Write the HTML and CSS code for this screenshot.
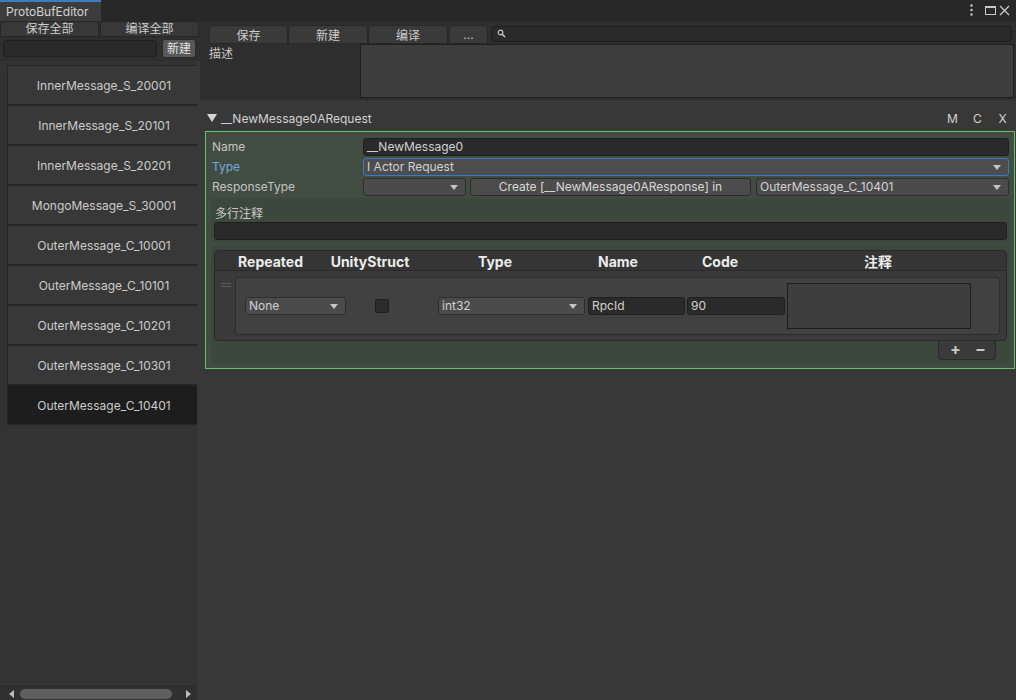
FILE: index.html
```html
<!DOCTYPE html>
<html>
<head>
<meta charset="utf-8">
<link rel="stylesheet" href="styles.css">
</head>
<body>
<div class="titlebar">
  <div class="tab">ProtoBufEditor</div>
  <svg class="winctl" width="50" height="21" viewBox="0 0 50 21">
    <circle cx="9.5" cy="5.5" r="1.2" fill="#c8c8c8"/>
    <circle cx="9.5" cy="10" r="1.2" fill="#c8c8c8"/>
    <circle cx="9.5" cy="14.5" r="1.2" fill="#c8c8c8"/>
    <rect x="23.5" y="6.5" width="10" height="8" fill="none" stroke="#c8c8c8" stroke-width="1"/>
    <rect x="23" y="6" width="11" height="2" fill="#c8c8c8"/>
    <path d="M38 6 L47 15 M47 6 L38 15" stroke="#c8c8c8" stroke-width="1.3"/>
  </svg>
</div>
<div class="main">
  <div class="left">
    <div class="lbtns">
      <div class="tbtn lw">保存全部</div>
      <div class="tbtn lw">编译全部</div>
    </div>
    <div class="lnew">
      <div class="tfield lin"></div>
      <div class="btn newbtn">新建</div>
    </div>
    <div class="list">
      <div class="items">
        <div class="item">InnerMessage_S_20001</div>
        <div class="item">InnerMessage_S_20101</div>
        <div class="item">InnerMessage_S_20201</div>
        <div class="item">MongoMessage_S_30001</div>
        <div class="item">OuterMessage_C_10001</div>
        <div class="item">OuterMessage_C_10101</div>
        <div class="item">OuterMessage_C_10201</div>
        <div class="item">OuterMessage_C_10301</div>
        <div class="item sel">OuterMessage_C_10401</div>
      </div>
      <div class="hscroll">
        <svg width="5" height="8" viewBox="0 0 5 8"><polygon points="5,0 5,8 0,4" fill="#bdbdbd"/></svg>
        <div class="thumb"></div>
        <svg class="rarrow" width="5" height="8" viewBox="0 0 5 8"><polygon points="0,0 0,8 5,4" fill="#bdbdbd"/></svg>
      </div>
    </div>
  </div>
  <div class="right">
    <div class="toolbar">
      <div class="tbtn b79">保存</div>
      <div class="tbtn b80">新建</div>
      <div class="tbtn b80">编译</div>
      <div class="tbtn b39 dots">...</div>
      <div class="search">
        <svg width="10" height="10" viewBox="0 0 10 10"><circle cx="3.5" cy="3.5" r="2.3" fill="none" stroke="#c8c8c8" stroke-width="1.2"/><path d="M5.3 5.3 L8 8" stroke="#c8c8c8" stroke-width="1.6"/></svg>
      </div>
    </div>
    <div class="desc">
      <div class="desclabel">描述</div>
      <div class="descarea"></div>
    </div>
    <div class="msghead">
      <svg width="10" height="8" viewBox="0 0 10 8"><polygon points="0,0 10,0 5,8" fill="#d6d6d6"/></svg>
      <span class="msgtitle">__NewMessage0ARequest</span>
      <div class="hbtns"><span>M</span><span>C</span><span>X</span></div>
    </div>
    <div class="panel">
      <div class="row">
        <div class="plabel">Name</div>
        <div class="tfield grow">__NewMessage0</div>
      </div>
      <div class="row">
        <div class="plabel blue">Type</div>
        <div class="dd grow focus"><span>I Actor Request</span><svg width="8" height="5" viewBox="0 0 8 5"><polygon points="0,0 8,0 4,5" fill="#c4c4c4"/></svg></div>
      </div>
      <div class="row">
        <div class="plabel">ResponseType</div>
        <div class="dd w103"><span></span><svg width="8" height="5" viewBox="0 0 8 5"><polygon points="0,0 8,0 4,5" fill="#c4c4c4"/></svg></div>
        <div class="btn create">Create [__NewMessage0AResponse] in</div>
        <div class="dd grow ml5"><span>OuterMessage_C_10401</span><svg width="8" height="5" viewBox="0 0 8 5"><polygon points="0,0 8,0 4,5" fill="#c4c4c4"/></svg></div>
      </div>
      <div class="box cbox">
        <div class="clabel">多行注释</div>
        <div class="tfield"></div>
      </div>
      <div class="box fbox">
        <div class="table">
          <div class="thead">
            <span class="c1">Repeated</span>
            <span class="c2">UnityStruct</span>
            <span class="c3">Type</span>
            <span class="c4">Name</span>
            <span class="c5">Code</span>
            <span class="c6">注释</span>
          </div>
          <div class="tbody">
            <div class="handle"></div>
            <div class="frow">
              <div class="dd w101"><span>None</span><svg width="8" height="5" viewBox="0 0 8 5"><polygon points="0,0 8,0 4,5" fill="#c4c4c4"/></svg></div>
              <div class="check"></div>
              <div class="dd w147"><span>int32</span><svg width="8" height="5" viewBox="0 0 8 5"><polygon points="0,0 8,0 4,5" fill="#c4c4c4"/></svg></div>
              <div class="tfield fname">RpcId</div>
              <div class="tfield fcode">90</div>
              <div class="fcomment"></div>
            </div>
          </div>
        </div>
        <div class="tfoot"><span>+</span><span>−</span></div>
      </div>
    </div>
  </div>
</div>
</body>
</html>
```

FILE: styles.css
```css
* { box-sizing: border-box; margin: 0; padding: 0; }
html, body { width: 1016px; height: 700px; overflow: hidden; }
body {
  background: #383838;
  font-family: Inter, "Noto Sans CJK SC", sans-serif;
  font-size: 12px;
  color: #c4c4c4;
}
.titlebar { height: 21px; background: #282828; display: flex; }
.tab {
  width: 101px; background: #3c3c3c; border-top: 2px solid #3d7cc9;
  padding-left: 6px; line-height: 19px; color: #d4d4d4;
}
.winctl { margin-left: auto; margin-right: 4px; }
.main { display: flex; height: 679px; }

.left { width: 200px; display: flex; flex-direction: column; background: #383838; }
.lbtns { display: flex; height: 17px; background: #2f2f2f; }
.tbtn {
  background: #383838; border: 1px solid #262626; border-radius: 3px 3px 0 0;
  text-align: center; color: #cccccc; line-height: 14px; height: 16px;
}
.lw { width: 99px; margin-right: 1px; }
.lnew {
  display: flex; align-items: center; background: #2f2f2f;
  padding: 1px 0 3px 3px; height: 23px;
}
.tfield {
  background: #2a2a2a; border: 1px solid #1f1f1f; border-radius: 3px;
  height: 18px; line-height: 16px; padding-left: 3px; color: #d2d2d2;
}
.lin { width: 154px; height: 17px; }
.btn {
  background: #585858; border: 1px solid #2a2a2a; border-radius: 3px;
  color: #e2e2e2; text-align: center;
}
.newbtn { width: 34px; height: 19px; line-height: 17px; margin-left: 5px; }

.list { flex: 1; width: 197px; background: #333333; display: flex; flex-direction: column; overflow: hidden; }
.items { flex: 1; padding: 4px 0 0 7px; overflow: hidden; }
.item {
  width: 193px; height: 40px; background: #383838;
  border: 1px solid #262626; border-right: none;
  display: flex; align-items: center; justify-content: center;
  color: #cccccc; white-space: nowrap;
}
.item.sel { background: #1d1d1d; }
.hscroll {
  height: 14px; background: #303030; border-top: 1px solid #2a2a2a;
  display: flex; align-items: center; padding-left: 9px;
}
.thumb { width: 152px; height: 10px; border-radius: 5px; background: #5f5f5f; margin-left: 6px; }
.rarrow { margin-left: 14px; }

.right { flex: 1; display: flex; flex-direction: column; }
.toolbar { height: 23px; background: #2e2e2e; display: flex; padding: 4px 4px 0 9px; }
.toolbar .tbtn { height: 19px; line-height: 19px; background: #3a3a3a; border-color: #282828; }
.b79 { width: 79px; }
.b80 { width: 80px; }
.b39 { width: 39px; margin-left: 1px; }
.dots { line-height: 17px !important; }
.search {
  flex: 1; margin-left: 3px; margin-top: 1px; height: 16px;
  background: #2a2a2a; border: 1px solid #1e1e1e; border-radius: 4px;
  display: flex; align-items: center; padding-left: 5px;
}
.desc { height: 56px; background: #2e2e2e; display: flex; }
.desclabel { width: 160px; padding: 3px 0 0 9px; line-height: 14px; color: #c8c8c8; }
.descarea { flex: 1; height: 54px; margin-right: 2px; background: #3e3e3e; border: 1px solid #1f1f1f; }
.msghead {
  margin-top: 8px; height: 20px; display: flex; align-items: center;
  padding-left: 7px; color: #d2d2d2;
}
.msgtitle { margin-left: 4px; }
.hbtns { margin-left: auto; display: flex; margin-right: 1px; }
.hbtns span { width: 25px; text-align: center; }

.panel {
  margin: 3px 1px 0 5px; height: 238px;
  border: 1px solid #62c462; background: #414d41;
  padding: 6px 5px 0 6px;
}
.row { display: flex; height: 18px; margin-bottom: 2px; }
.plabel { width: 151px; line-height: 18px; color: #c4c4c4; }
.plabel.blue { color: #7ba6e0; }
.grow { flex: 1; }
.dd {
  background: #4b4b4b; border: 1px solid #2e2e2e; border-radius: 3px;
  height: 18px; display: flex; align-items: center; padding: 0 7px 0 3px;
  color: #d2d2d2;
}
.dd span { flex: 1; line-height: 16px; white-space: nowrap; }
.dd.focus { border-color: #3b79c4; background: #4d4d4d; }
.w103 { width: 103px; }
.w101 { width: 101px; }
.w147 { width: 147px; margin-left: 49px; }
.create { width: 281px; height: 18px; line-height: 16px; margin-left: 4px; background: #4c4c4c; color: #d8d8d8; }
.ml5 { margin-left: 5px; }

.box { margin: 0 -1px; background: #3c483c; }
.cbox { margin-top: 1px; padding: 0 3px 3px 3px; }
.clabel { height: 24px; line-height: 20px; padding: 6px 0 0 1px; color: #c8c8c8; }
.fbox { margin-top: 3px; padding: 4px 3px 4px 3px; display: flex; flex-direction: column; }
.table { border: 1px solid #292929; border-radius: 4px; background: #3a3a3a; overflow: hidden; }
.thead {
  height: 20px; background: #353535; border-bottom: 1px solid #2a2a2a;
  display: flex; font-weight: 700; font-size: 14px; color: #ececec; line-height: 22px;
}
.thead span { text-align: center; white-space: nowrap; }
.c1 { width: 111px; }
.c2 { width: 88px; }
.c3 { width: 162px; }
.c4 { width: 84px; }
.c5 { width: 120px; }
.c6 { width: 196px; }
.tbody { display: flex; padding: 6px 6px 5px 0; }
.handle {
  width: 10px; height: 4px; margin: 6px 4px 0 6px;
  border-top: 1px solid #5e5e5e; border-bottom: 1px solid #5e5e5e;
}
.frow {
  flex: 1; height: 58px; background: #414141; border: 1px solid #2c2c2c; border-radius: 3px;
  display: flex; align-items: center; padding-left: 9px;
}
.check {
  width: 14px; height: 14px; margin-left: 29px;
  background: #2c2c2c; border: 1px solid #1f1f1f; border-radius: 2px;
}
.fname { width: 97px; margin-left: 3px; }
.fcode { width: 98px; margin-left: 2px; }
.fcomment { width: 184px; height: 46px; margin-left: 2px; background: #3e3e3e; border: 1px solid #1e1e1e; }
.tfoot {
  align-self: flex-end; margin-right: 11px; width: 58px; height: 19px;
  background: #3a3a3a; border: 1px solid #292929; border-top: none; border-radius: 0 0 4px 4px;
  display: flex; padding-left: 4px; font-size: 16px; font-weight: 700; color: #c8c8c8; line-height: 17px;
}
.tfoot span { width: 25px; text-align: center; }
```
